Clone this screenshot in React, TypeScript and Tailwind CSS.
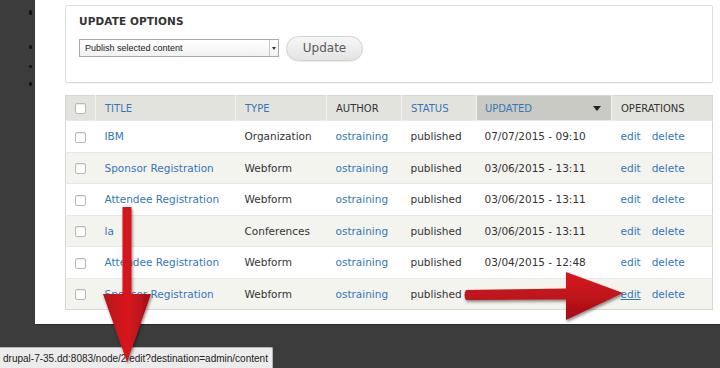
import React from 'react';

type Row = {
    title: string;
    type: string;
    author: string;
    status: string;
    updated: string;
    editHover?: boolean;
};

const rows: Row[] = [
    { title: 'IBM', type: 'Organization', author: 'ostraining', status: 'published', updated: '07/07/2015 - 09:10' },
    { title: 'Sponsor Registration', type: 'Webform', author: 'ostraining', status: 'published', updated: '03/06/2015 - 13:11' },
    { title: 'Attendee Registration', type: 'Webform', author: 'ostraining', status: 'published', updated: '03/06/2015 - 13:11' },
    { title: 'la', type: 'Conferences', author: 'ostraining', status: 'published', updated: '03/06/2015 - 13:11' },
    { title: 'Attendee Registration', type: 'Webform', author: 'ostraining', status: 'published', updated: '03/04/2015 - 12:48' },
    { title: 'Sponsor Registration', type: 'Webform', author: 'ostraining', status: 'published', updated: '03/04/2015 - 12:47', editHover: true },
];

const Checkbox = () => (
    <span className="block w-[11px] h-[11px] rounded-[2px] border border-[#b8b8b8] bg-white shadow-[inset_0_1px_1px_rgba(0,0,0,0.08)]" />
);

// the two red callout arrows drawn over the screenshot
const Arrows = () => (
    <svg className="absolute inset-0 pointer-events-none" width="720" height="368" viewBox="0 0 720 368">
        <defs>
            <linearGradient id="redV" x1="0" y1="0" x2="1" y2="0">
                <stop offset="0" stopColor="#b3121a" />
                <stop offset="0.5" stopColor="#d8161f" />
                <stop offset="1" stopColor="#a50f16" />
            </linearGradient>
            <linearGradient id="redH" x1="0" y1="0" x2="0" y2="1">
                <stop offset="0" stopColor="#d8161f" />
                <stop offset="1" stopColor="#a50f16" />
            </linearGradient>
            <filter id="shadow" x="-20%" y="-20%" width="140%" height="140%">
                <feDropShadow dx="1" dy="2" stdDeviation="1.5" floodColor="#000" floodOpacity="0.45" />
            </filter>
        </defs>
        <g filter="url(#shadow)">
            <path d="M122.5 207 L131.5 207 L131.5 294 L151 294 L127 362 L103 294 L122.5 294 Z" fill="url(#redV)" />
            <path d="M466 290 L566 288.5 L566 272 L623 293 L566 320 L566 299.5 L466 300 Q463 295 466 290 Z" fill="url(#redH)" />
        </g>
    </svg>
);

export default function App() {
    const font = { fontFamily: '"DejaVu Sans", Verdana, sans-serif' };

    return (
        <div className="relative w-[720px] h-[368px] overflow-hidden bg-[#3c3c3c]" style={font}>
            <div className="flex items-start">
                {/* edge of the admin sidebar */}
                <div className="w-[36px] h-[325px] flex flex-col items-end pr-[3px] pt-[10px] gap-[14px]">
                    <span className="w-[3px] h-[5px] bg-[#111] rounded-full" />
                    <span className="w-[3px] h-[4px] bg-[#111] rounded-full mt-[16px]" />
                    <span className="w-[3px] h-[3px] bg-[#111] rounded-full mt-[2px]" />
                    <span className="w-[3px] h-[4px] bg-[#111] rounded-full" />
                </div>

                <div className="flex-1 h-[325px] bg-white pl-[30px] pr-[7px] pt-[5px] border-b border-[#2a2a2a]">
                    {/* update options fieldset */}
                    <div className="h-[78px] border border-[#dcdcdc] rounded-[2px] px-[13px] pt-[8px] shadow-[0_1px_1px_rgba(0,0,0,0.04)]">
                        <div className="text-[10.5px] font-bold text-[#333] tracking-[0.1px]">UPDATE OPTIONS</div>
                        <div className="flex items-center mt-[6px] gap-[7px]">
                            <div className="flex items-center w-[200px] h-[18px] border border-[#a9a9a9] bg-gradient-to-b from-white to-[#f1f1f1]">
                                <span className="flex-1 pl-[5px] text-[9px] text-[#222]" style={{ fontFamily: '"Liberation Sans", Arial, sans-serif' }}>
                                    Publish selected content
                                </span>
                                <span className="w-[9px] h-[16px] border-l border-[#c8c8c8] flex items-center justify-center">
                                    <span className="w-0 h-0 border-l-[2.5px] border-r-[2.5px] border-t-[3px] border-l-transparent border-r-transparent border-t-[#333]" />
                                </span>
                            </div>
                            <button className="w-[77px] h-[25px] rounded-full border border-[#d2d2d2] bg-gradient-to-b from-[#f6f6f6] to-[#e4e4e4] text-[12px] text-[#5a5a5a] shadow-[0_1px_1px_rgba(0,0,0,0.08)]">
                                Update
                            </button>
                        </div>
                    </div>

                    {/* content table */}
                    <table className="mt-[12px] w-[647px] table-fixed border-collapse border border-[#d6d6d2] text-[10.5px] text-[#333]">
                        <colgroup>
                            <col className="w-[30px]" />
                            <col className="w-[140px]" />
                            <col className="w-[91px]" />
                            <col className="w-[75px]" />
                            <col className="w-[75px]" />
                            <col className="w-[135px]" />
                            <col className="w-[101px]" />
                        </colgroup>
                        <thead>
                            <tr className="h-[25px] bg-[#e3e3de] text-[10px] text-left">
                                <th className="pl-[9px] font-normal"><Checkbox /></th>
                                <th className="pl-[9px] font-normal text-[#3576b8] border-l border-[#f2f2ee]">TITLE</th>
                                <th className="pl-[9px] font-normal text-[#3576b8] border-l border-[#f2f2ee]">TYPE</th>
                                <th className="pl-[9px] font-normal text-[#333] border-l border-[#f2f2ee]">AUTHOR</th>
                                <th className="pl-[9px] font-normal text-[#3576b8] border-l border-[#f2f2ee]">STATUS</th>
                                <th className="pl-[8px] pr-[10px] font-normal text-[#3576b8] bg-[#cacac4] border-l border-[#f2f2ee]">
                                    <div className="flex items-center justify-between">
                                        <span>UPDATED</span>
                                        <span className="w-0 h-0 border-l-[4px] border-r-[4px] border-t-[5px] border-l-transparent border-r-transparent border-t-[#222]" />
                                    </div>
                                </th>
                                <th className="pl-[9px] font-normal text-[#333] border-l border-[#f2f2ee]">OPERATIONS</th>
                            </tr>
                        </thead>
                        <tbody>
                            {rows.map((row, i) => (
                                <tr key={i} className={`h-[31.5px] border-t border-[#e8e8e4] ${i % 2 === 1 ? 'bg-[#f4f4ef]' : 'bg-white'}`}>
                                    <td className="pl-[9px] pt-[2px]"><Checkbox /></td>
                                    <td className="pl-[9px] pt-[2px] text-[#3576b8] whitespace-nowrap">{row.title}</td>
                                    <td className="pl-[9px] pt-[2px] whitespace-nowrap">{row.type}</td>
                                    <td className="pl-[9px] pt-[2px] text-[#3576b8]">{row.author}</td>
                                    <td className="pl-[9px] pt-[2px]">{row.status}</td>
                                    <td className="pl-[8px] pt-[2px] whitespace-nowrap">{row.updated}</td>
                                    <td className="pl-[9px] pt-[2px] text-[#3576b8] whitespace-nowrap">
                                        <span className={row.editHover ? 'underline' : ''}>edit</span>
                                        <span className="ml-[11px]">delete</span>
                                    </td>
                                </tr>
                            ))}
                        </tbody>
                    </table>
                </div>
            </div>

            {/* browser status bar showing hovered link */}
            <div
                className="absolute left-0 bottom-0 h-[21px] w-[273px] flex items-center pl-[3px] bg-[#ececec] border-t border-r border-[#b5b5b5] rounded-tr-[2px] text-[10px] text-[#222] whitespace-nowrap"
                style={{ fontFamily: '"Liberation Sans", Arial, sans-serif' }}
            >
                drupal-7-35.dd:8083/node/2/edit?destination=admin/content
            </div>

            <Arrows />
        </div>
    );
}
